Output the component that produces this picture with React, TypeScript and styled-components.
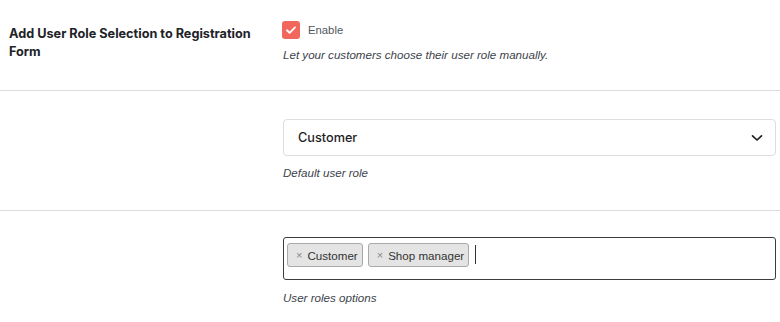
import styled, { createGlobalStyle } from "styled-components";

const GlobalStyle = createGlobalStyle`
  html, body {
    margin: 0;
    padding: 0;
    background: #ffffff;
  }
  body {
    font-family: Inter, "Noto Sans", sans-serif;
    color: #1e1e1e;
  }
`;

const Form = styled.div`
  width: 780px;
  height: 322px;
  overflow: hidden;
  background: #ffffff;
`;

const Row = styled.div<{ $top: number; $bottom: number; $divider?: boolean }>`
  display: grid;
  grid-template-columns: 273px 1fr;
  padding: ${({ $top }) => $top}px 4px ${({ $bottom }) => $bottom}px 9px;
  border-bottom: ${({ $divider }) => ($divider ? "1px solid #dcdcde" : "none")};
`;

const Label = styled.div`
  font-size: 12.7px;
  font-weight: 700;
  line-height: 18px;
  color: #1d2327;
  margin-top: 5px;
  padding-right: 16px;
`;

const Field = styled.div`
  display: flex;
  flex-direction: column;
  padding-left: 1px;
`;

const CheckLine = styled.label`
  display: flex;
  align-items: center;
  gap: 8px;
  height: 20px;
  font-family: "Liberation Sans", Arial, sans-serif;
  font-size: 11.3px;
  color: #50575e;
`;

const CheckBox = styled.span`
  width: 18px;
  height: 18px;
  border-radius: 3px;
  background: #f2675c;
  display: flex;
  align-items: center;
  justify-content: center;
  margin-left: -1px;
`;

const Description = styled.p<{ $gap: number }>`
  margin: ${({ $gap }) => $gap}px 0 0;
  font-family: "Liberation Sans", Arial, sans-serif;
  font-size: 11.6px;
  line-height: 18px;
  font-style: italic;
  color: #3c434a;
`;

const Select = styled.div`
  height: 37px;
  box-sizing: border-box;
  border: 1px solid #dddddd;
  border-radius: 4px;
  display: flex;
  align-items: center;
  justify-content: space-between;
  padding: 0 12px 0 14px;
  font-size: 12.7px;
  font-weight: 500;
  color: #1e1e1e;
`;

const MultiSelect = styled.div`
  height: 43px;
  box-sizing: border-box;
  border: 1px solid #3c3c3c;
  border-radius: 3px;
  display: flex;
  align-items: flex-start;
  gap: 5px;
  padding: 5px 3px;
`;

const Tag = styled.span`
  display: flex;
  align-items: center;
  gap: 5px;
  height: 24px;
  box-sizing: border-box;
  padding: 0 4px 0 8px;
  background: #e4e4e4;
  border: 1px solid #aaaaaa;
  border-radius: 3px;
  font-family: "Liberation Sans", Arial, sans-serif;
  font-size: 11.6px;
  color: #333333;
`;

const Remove = styled.span`
  font-size: 11px;
  color: #888888;
`;

const Caret = styled.span`
  width: 1px;
  height: 19px;
  background: #333333;
  margin: 2px 0 0 1px;
`;

const Check = () => (
  <svg width="12" height="12" viewBox="0 0 12 12" fill="none">
    <path d="M2 6.3l2.6 2.5L10 3.4" stroke="#fff" strokeWidth="1.9" strokeLinecap="round" strokeLinejoin="round" />
  </svg>
);

const Chevron = () => (
  <svg width="12" height="8" viewBox="0 0 12 8" fill="none">
    <path d="M1.5 1.8L6 6l4.5-4.2" stroke="#1e1e1e" strokeWidth="1.7" strokeLinecap="round" strokeLinejoin="round" />
  </svg>
);

export default function App() {
  return (
    <>
      <GlobalStyle />
      <Form>
        <Row $top={20} $bottom={26} $divider>
          <Label>Add User Role Selection to Registration Form</Label>
          <Field>
            <CheckLine>
              <CheckBox>
                <Check />
              </CheckBox>
              Enable
            </CheckLine>
            <Description $gap={6}>Let your customers choose their user role manually.</Description>
          </Field>
        </Row>
        <Row $top={28} $bottom={28} $divider>
          <div />
          <Field>
            <Select>
              Customer
              <Chevron />
            </Select>
            <Description $gap={8}>Default user role</Description>
          </Field>
        </Row>
        <Row $top={26} $bottom={14}>
          <div />
          <Field>
            <MultiSelect>
              <Tag>
                <Remove>×</Remove>Customer
              </Tag>
              <Tag>
                <Remove>×</Remove>Shop manager
              </Tag>
              <Caret />
            </MultiSelect>
            <Description $gap={9}>User roles options</Description>
          </Field>
        </Row>
      </Form>
    </>
  );
}
